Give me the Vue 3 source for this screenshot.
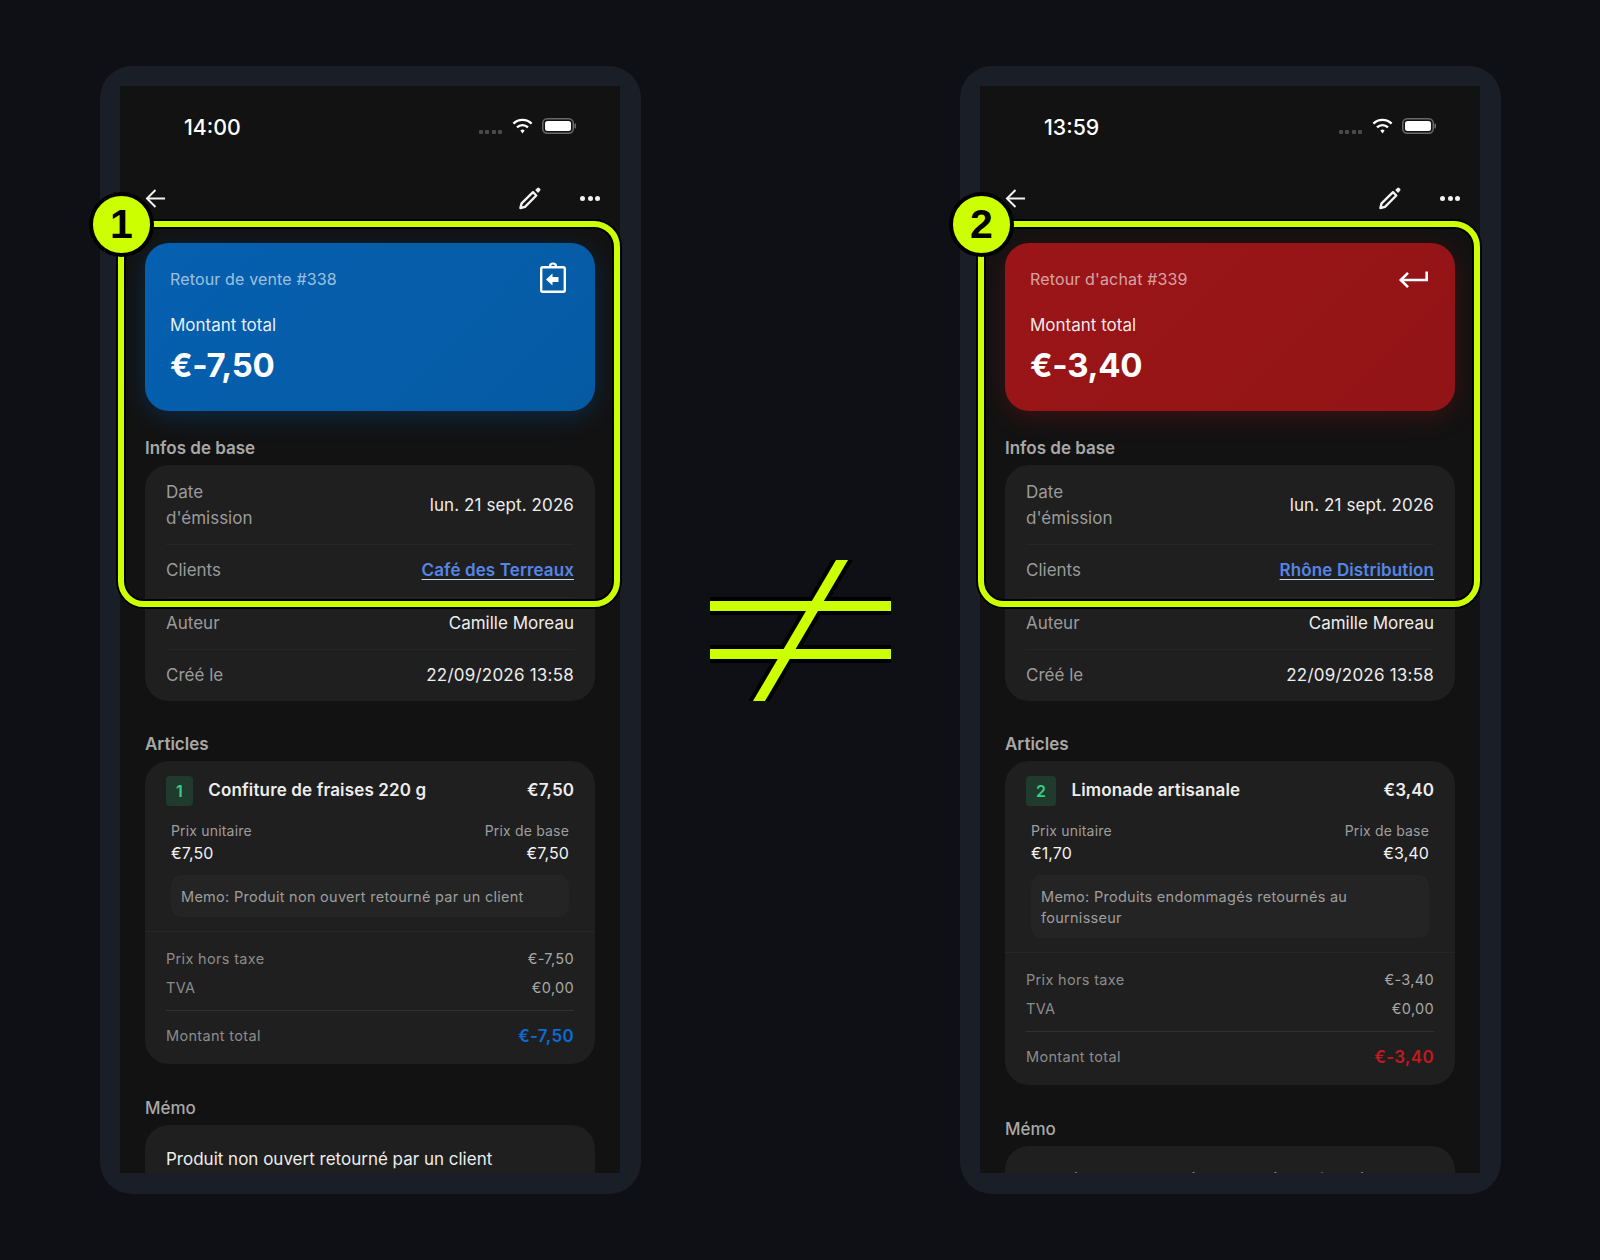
<script setup>
const panels = [
  {
    n: 1, time: '14:00', tone: 'blue', icon: 'clipboard', title: 'Retour de vente #338', amount: '€-7,50',
    client: 'Café des Terreaux', qty: 1, name: 'Confiture de fraises 220 g', price: '€7,50',
    unit: '€7,50', base: '€7,50', note: 'Memo: Produit non ouvert retourné par un client',
    net: '€-7,50', vat: '€0,00', memo: 'Produit non ouvert retourné par un client'
  },
  {
    n: 2, time: '13:59', tone: 'red', icon: 'return', title: "Retour d'achat #339", amount: '€-3,40',
    client: 'Rhône Distribution', qty: 2, name: 'Limonade artisanale', price: '€3,40',
    unit: '€1,70', base: '€3,40', note: 'Memo: Produits endommagés retournés au fournisseur',
    net: '€-3,40', vat: '€0,00', memo: 'Produits endommagés retournés au fournisseur'
  }
]
</script>

<template>
  <div class="page">
    <template v-for="(p, i) in panels" :key="p.n">
      <div class="symbol" v-if="i === 1">
        <svg width="181" height="141" viewBox="0 0 181 141">
          <g fill="#000">
            <rect x="0" y="37" width="181" height="18" />
            <rect x="0" y="85" width="181" height="18" />
          </g>
          <polygon points="126,0 138,0 55,141 43,141" fill="#000" stroke="#000" stroke-width="8" />
          <g fill="#ccff00">
            <rect x="0" y="41" width="181" height="10" />
            <rect x="0" y="89" width="181" height="10" />
            <polygon points="126,0 138,0 55,141 43,141" />
          </g>
        </svg>
      </div>
      <section class="phone">
        <div class="screen">
          <div class="status">
            <span class="time">{{ p.time }}</span>
            <div class="status-icons">
              <span class="signal"><i></i><i></i><i></i><i></i></span>
              <svg class="wifi" width="21" height="16" viewBox="0 0 21 16" fill="none" stroke="#fff" stroke-width="2.4">
                <path d="M1.4 5.6A13 13 0 0 1 19.6 5.6" />
                <path d="M5 9.3A8 8 0 0 1 16 9.3" />
                <path d="M8.4 12.4L10.5 15.6L12.6 12.4A3.4 3.4 0 0 0 8.4 12.4Z" fill="#fff" stroke="none" />
              </svg>
              <svg width="34" height="16" viewBox="0 0 34 16">
                <rect x="0.75" y="0.75" width="30.5" height="14.5" rx="4.5" fill="none" stroke="#6a6a6a" stroke-width="1.5" />
                <rect x="3" y="3" width="26" height="10" rx="2.5" fill="#fff" />
                <rect x="32.4" y="5.5" width="1.6" height="5" rx="0.8" fill="#6a6a6a" />
              </svg>
            </div>
          </div>

          <div class="nav">
            <svg width="20" height="19" viewBox="0 0 20 19" fill="none" stroke="#f2f2f2" stroke-width="2">
              <path d="M20 9.5H2" />
              <path d="M10.5 1L2 9.5L10.5 18" />
            </svg>
            <div class="nav-actions">
              <svg width="24" height="24" viewBox="0 0 24 24" fill="none" stroke="#f2f2f2" stroke-width="2.4" stroke-linejoin="round">
                <path d="M15 6.2L18.3 9.5L7 20.8L2.4 22L3.6 17.4Z" />
                <path d="M17.2 4L19.3 1.9A1.3 1.3 0 0 1 21.2 1.9L22.1 2.8A1.3 1.3 0 0 1 22.1 4.7L20 7Z" fill="#f2f2f2" stroke="none" />
              </svg>
              <span class="more"><i></i><i></i><i></i></span>
            </div>
          </div>

          <div class="content">
            <div class="hero" :class="p.tone">
              <div class="hero-top">
                <span class="hero-title">{{ p.title }}</span>
                <svg v-if="p.icon === 'clipboard'" width="34" height="34" viewBox="0 0 34 34">
                  <rect x="5.2" y="5.2" width="23.6" height="24.6" rx="1.5" fill="none" stroke="#fff" stroke-width="2.4" />
                  <path d="M14 4.5A3 3 0 0 1 20 4.5" fill="none" stroke="#fff" stroke-width="2.2" />
                  <path d="M10 17.5L16.5 11.5V15H22.5V20H16.5V23.5Z" fill="#fff" />
                </svg>
                <svg v-else width="34" height="34" viewBox="0 0 34 34" fill="none" stroke="#fff" stroke-width="2.6">
                  <path d="M30.7 9.5V18H5" />
                  <path d="M12 10.8L4.8 18L12 25.2" />
                </svg>
              </div>
              <div class="hero-label">Montant total</div>
              <div class="hero-amount">{{ p.amount }}</div>
            </div>

            <h2 class="heading first">Infos de base</h2>
            <div class="card info">
              <div class="row tall">
                <span class="label narrow">Date d'émission</span>
                <span class="value dated">lun. 21 sept. 2026</span>
              </div>
              <div class="row client">
                <span class="label">Clients</span>
                <a class="link">{{ p.client }}</a>
              </div>
              <div class="row">
                <span class="label">Auteur</span>
                <span class="value">Camille Moreau</span>
              </div>
              <div class="row last">
                <span class="label">Créé le</span>
                <span class="value stamp">22/09/2026 13:58</span>
              </div>
            </div>

            <h2 class="heading">Articles</h2>
            <div class="card article">
              <div class="item">
                <div class="item-head">
                  <span class="qty">{{ p.qty }}</span>
                  <span class="item-name">{{ p.name }}</span>
                  <span class="item-price">{{ p.price }}</span>
                </div>
                <div class="prices">
                  <div>
                    <div class="small-label">Prix unitaire</div>
                    <div class="small-value">{{ p.unit }}</div>
                  </div>
                  <div class="right">
                    <div class="small-label">Prix de base</div>
                    <div class="small-value">{{ p.base }}</div>
                  </div>
                </div>
                <div class="note">{{ p.note }}</div>
              </div>
              <div class="totals">
                <div class="total-row"><span>Prix hors taxe</span><span>{{ p.net }}</span></div>
                <div class="total-row"><span>TVA</span><span>{{ p.vat }}</span></div>
                <div class="total-row grand">
                  <span>Montant total</span>
                  <strong :class="p.tone">{{ p.amount }}</strong>
                </div>
              </div>
            </div>

            <h2 class="heading memo-heading">Mémo</h2>
            <div class="card memo">{{ p.memo }}</div>
          </div>
        </div>

        <div class="highlight"></div>
        <div class="badge">{{ p.n }}</div>
      </section>
    </template>
  </div>
</template>

<style>
html, body { margin: 0; background: #0e1015; }
</style>

<style scoped>
.page {
  width: 1600px;
  height: 1260px;
  box-sizing: border-box;
  padding: 66px 99px 66px 100px;
  display: flex;
  background: #0e1015;
  font-family: Inter, "Liberation Sans", sans-serif;
  overflow: hidden;
}
.symbol {
  flex: 1;
  display: flex;
  align-items: center;
  justify-content: center;
}
.symbol svg { display: block; }
.phone {
  position: relative;
  width: 541px;
  height: 1128px;
  flex: none;
  box-sizing: border-box;
  padding: 20px 21px 21px 20px;
  border-radius: 32px;
  background: #1a1e27;
}
.screen {
  height: 100%;
  overflow: hidden;
  background: #121212;
}
.status {
  height: 82px;
  box-sizing: border-box;
  padding: 26px 44px 0 64px;
  display: flex;
  justify-content: space-between;
}
.time {
  font-size: 21.3px;
  line-height: 30px;
  font-weight: 500;
  color: #fff;
}
.status-icons {
  display: flex;
  align-items: flex-start;
  gap: 9px;
  padding-top: 6px;
}
.signal {
  display: flex;
  gap: 2.4px;
  margin-top: 12px;
  margin-right: 1px;
}
.signal i {
  width: 4px;
  height: 4px;
  border-radius: 1px;
  background: #4a4a4a;
}
.nav {
  height: 60px;
  padding: 0 20px 0 25px;
  display: flex;
  align-items: center;
  justify-content: space-between;
}
.nav-actions {
  display: flex;
  align-items: center;
  gap: 38px;
}
.more {
  display: flex;
  gap: 2.5px;
}
.more i {
  width: 5px;
  height: 5px;
  border-radius: 50%;
  background: #f2f2f2;
}
.content {
  padding: 15px 25px 0;
}
.hero {
  box-sizing: border-box;
  height: 168px;
  padding: 19px 25px 0;
  border-radius: 24px;
  color: #fff;
}
.hero.blue {
  background: linear-gradient(135deg, #0660b0, #055aa3);
  box-shadow: 0 6px 24px rgba(6, 96, 179, 0.3);
}
.hero.red {
  background: linear-gradient(135deg, #9b1518, #921416);
  box-shadow: 0 6px 24px rgba(157, 21, 24, 0.3);
}
.hero-top {
  display: flex;
  align-items: center;
  justify-content: space-between;
  height: 34px;
}
.hero-top svg { display: block; }
.hero-title {
  font-size: 16px;
  letter-spacing: 0.15px;
  color: rgba(255, 255, 255, 0.62);
}
.hero-label {
  margin-top: 17px;
  font-size: 17px;
  line-height: 24px;
  color: rgba(255, 255, 255, 0.92);
}
.hero-amount {
  margin-top: 8px;
  font-size: 33px;
  line-height: 40px;
  font-weight: 700;
  letter-spacing: -0.3px;
}
.heading {
  margin: 32px 0 6px;
  font-size: 17px;
  line-height: 22px;
  font-weight: 600;
  color: #a8a8a8;
}
.heading.first { margin-top: 26px; margin-bottom: 6px; }
.heading.memo-heading { margin-top: 33px; font-weight: 500; }
.card {
  border-radius: 24px;
  background: #1f1f1f;
}
.info { padding: 0 21px; }
.row {
  display: flex;
  align-items: center;
  justify-content: space-between;
  padding: 12px 0 13px;
  border-top: 1px solid #262626;
  font-size: 17px;
  line-height: 26px;
}
.row.tall { padding: 14px 0 13px; border-top: 0; }
.row.client { padding-bottom: 14px; }
.row.last { padding-bottom: 13px; }
.label { color: #9b9b9b; }
.label.narrow { width: 110px; }
.value { color: #ededed; }
.value.dated { letter-spacing: 0.1px; }
.value.stamp { letter-spacing: 0.22px; }
.link {
  color: #5585e6;
  font-weight: 600;
  letter-spacing: 0.12px;
  text-decoration: underline;
  text-decoration-color: #c8d6f2;
  text-underline-offset: 3px;
}
.item { padding: 15px 21px 14px; }
.item-head {
  display: flex;
  align-items: center;
  height: 30px;
}
.qty {
  padding: 0 10px;
  box-sizing: border-box;
  height: 30px;
  display: flex;
  align-items: center;
  justify-content: center;
  margin-right: 15.5px;
  border-radius: 4px;
  background: #203a2d;
  color: #35d07f;
  font-size: 16px;
  font-weight: 600;
}
.item-name {
  flex: 1;
  margin-bottom: 3px;
  font-size: 17px;
  font-weight: 600;
  letter-spacing: 0.15px;
  color: #ededed;
}
.item-price {
  margin-bottom: 3px;
  font-size: 17px;
  font-weight: 600;
  letter-spacing: 0.1px;
  color: #ededed;
}
.prices {
  display: flex;
  justify-content: space-between;
  margin-top: 15px;
  padding: 0 5px;
}
.right { text-align: right; }
.small-label {
  font-size: 14px;
  line-height: 20px;
  letter-spacing: 0.18px;
  color: #9e9e9e;
}
.small-value {
  font-size: 16px;
  line-height: 24px;
  letter-spacing: 0.1px;
  color: #f2f2f2;
}
.note {
  margin: 10px 5px 0;
  padding: 10.5px 10px;
  border-radius: 10px;
  background: #242424;
  font-size: 14.5px;
  line-height: 21px;
  letter-spacing: 0.28px;
  color: #9e9e9e;
}
.totals {
  border-top: 1px solid #262626;
  padding: 17px 21px 15px;
}
.total-row {
  display: flex;
  justify-content: space-between;
  font-size: 14.5px;
  line-height: 20px;
  letter-spacing: 0.33px;
  color: #8c8c8c;
}
.total-row + .total-row { margin-top: 9px; }
.total-row span:last-child { color: #a8a8a8; }
.total-row.grand {
  align-items: center;
  margin-top: 12px;
  padding-top: 12px;
  border-top: 1px solid #303030;
  line-height: 26px;
}
.total-row.grand span:last-child { color: #8c8c8c; }
.total-row.grand strong {
  font-size: 17px;
  font-weight: 600;
}
strong.blue { color: #0a6cd6; }
strong.red { color: #c21a1e; }
.memo {
  padding: 21px 21px;
  font-size: 17px;
  line-height: 26px;
  color: #ededed;
}
.highlight {
  position: absolute;
  left: 18px;
  top: 155px;
  width: 502px;
  height: 386px;
  box-sizing: border-box;
  border: 6px solid #ccff00;
  border-radius: 26px;
  box-shadow: 0 0 0 2px #000, inset 0 0 0 2px #000;
}
.badge {
  position: absolute;
  left: -11px;
  top: 126px;
  width: 57px;
  height: 57px;
  box-sizing: content-box;
  border-radius: 50%;
  border: 4px solid #000;
  background: #ccff00;
  color: #000;
  display: flex;
  align-items: center;
  justify-content: center;
  font-family: "Liberation Sans", Arial, sans-serif;
  font-size: 41px;
  font-weight: 700;
  line-height: 1;
}
</style>
